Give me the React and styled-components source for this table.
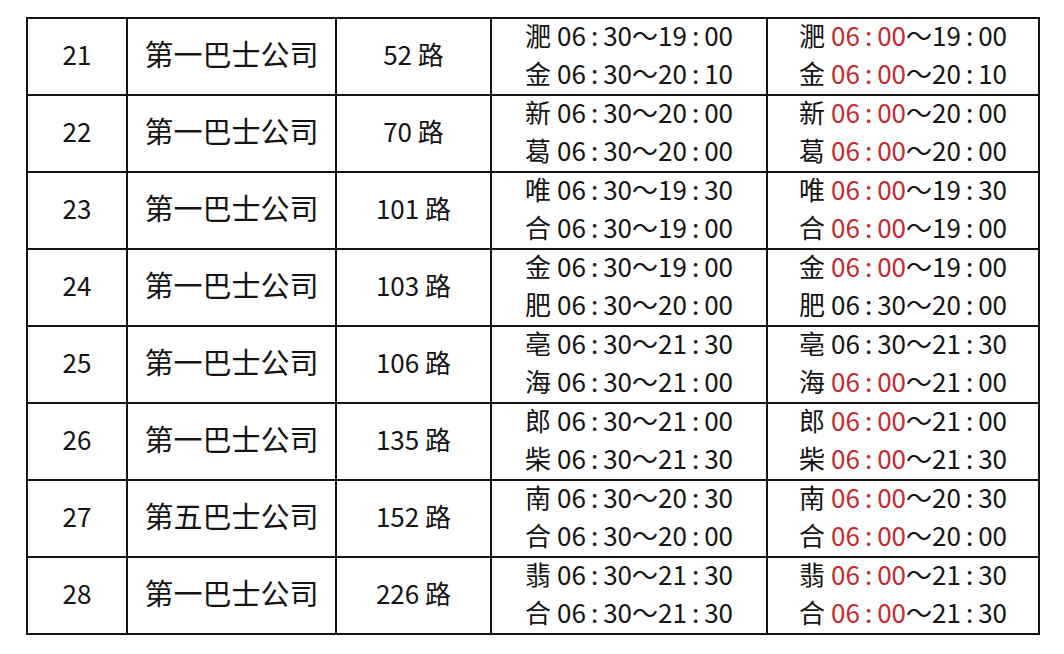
import React from "react";
import styled, { createGlobalStyle } from "styled-components";

const GlobalStyle = createGlobalStyle`
  html, body {
    margin: 0;
    padding: 0;
    background: #fff;
  }
  body {
    font-family: "Noto Sans CJK SC", "Noto Sans", sans-serif;
    color: #111;
  }
`;

const rows = [
  { no: 21, company: "第一巴士公司", route: "52", old: [["淝", "06:30", "19:00"], ["金", "06:30", "20:10"]], next: [["淝", "06:00", "19:00", true], ["金", "06:00", "20:10", true]] },
  { no: 22, company: "第一巴士公司", route: "70", old: [["新", "06:30", "20:00"], ["葛", "06:30", "20:00"]], next: [["新", "06:00", "20:00", true], ["葛", "06:00", "20:00", true]] },
  { no: 23, company: "第一巴士公司", route: "101", old: [["唯", "06:30", "19:30"], ["合", "06:30", "19:00"]], next: [["唯", "06:00", "19:30", true], ["合", "06:00", "19:00", true]] },
  { no: 24, company: "第一巴士公司", route: "103", old: [["金", "06:30", "19:00"], ["肥", "06:30", "20:00"]], next: [["金", "06:00", "19:00", true], ["肥", "06:30", "20:00", false]] },
  { no: 25, company: "第一巴士公司", route: "106", old: [["亳", "06:30", "21:30"], ["海", "06:30", "21:00"]], next: [["亳", "06:30", "21:30", false], ["海", "06:00", "21:00", true]] },
  { no: 26, company: "第一巴士公司", route: "135", old: [["郎", "06:30", "21:00"], ["柴", "06:30", "21:30"]], next: [["郎", "06:00", "21:00", true], ["柴", "06:00", "21:30", true]] },
  { no: 27, company: "第五巴士公司", route: "152", old: [["南", "06:30", "20:30"], ["合", "06:30", "20:00"]], next: [["南", "06:00", "20:30", true], ["合", "06:00", "20:00", true]] },
  { no: 28, company: "第一巴士公司", route: "226", old: [["翡", "06:30", "21:30"], ["合", "06:30", "21:30"]], next: [["翡", "06:00", "21:30", true], ["合", "06:00", "21:30", true]] },
];

const Page = styled.div`
  padding: 17px 0 0 26px;
  width: 1064px;
  height: 654px;
  box-sizing: border-box;
`;

const Table = styled.table`
  border-collapse: collapse;
  table-layout: fixed;
  width: 1012px;
`;

const Col = styled.col`
  width: ${(p) => p.$w}px;
`;

const Cell = styled.td`
  border: 2px solid #151515;
  height: 77px;
  box-sizing: border-box;
  padding: 0 0 ${(p) => (p.$lines ? 0 : 6)}px;
  text-align: center;
  vertical-align: middle;
  font-size: ${(p) => (p.$big ? 29 : 26)}px;
  line-height: 1;
  color: #141414;
`;

const Lines = styled.div`
  display: flex;
  flex-direction: column;
  align-items: center;
  margin-top: -5px;
`;

const Line = styled.div`
  font-size: 26px;
  line-height: 38px;
  white-space: nowrap;
`;

const Stop = styled.span`
  margin-right: 6px;
`;

const Time = styled.span`
  color: ${(p) => (p.$red ? "#c42a2f" : "inherit")};
`;

const Colon = styled.span`
  margin: 0 5px;
`;

const Clock = ({ value, red }) => {
  const [h, m] = value.split(":");
  return (
    <Time $red={red}>
      {h}
      <Colon>:</Colon>
      {m}
    </Time>
  );
};

const Schedule = ({ items }) => (
  <Lines>
    {items.map(([stop, from, to, red], i) => (
      <Line key={i}>
        <Stop>{stop}</Stop>
        <Clock value={from} red={red} />～<Clock value={to} />
      </Line>
    ))}
  </Lines>
);

export default function App() {
  return (
    <>
      <GlobalStyle />
      <Page>
        <Table>
          <colgroup>
            <Col $w={100} />
            <Col $w={209} />
            <Col $w={155} />
            <Col $w={276} />
            <Col $w={272} />
          </colgroup>
          <tbody>
            {rows.map((r) => (
              <tr key={r.no}>
                <Cell>{r.no}</Cell>
                <Cell $big>{r.company}</Cell>
                <Cell>{r.route} 路</Cell>
                <Cell $lines>
                  <Schedule items={r.old} />
                </Cell>
                <Cell $lines>
                  <Schedule items={r.next} />
                </Cell>
              </tr>
            ))}
          </tbody>
        </Table>
      </Page>
    </>
  );
}
